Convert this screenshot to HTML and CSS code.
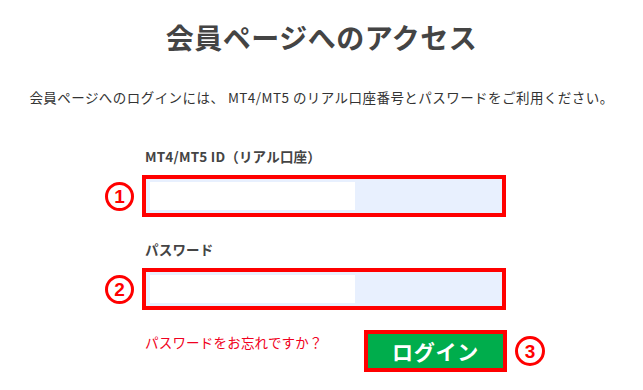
FILE: index.html
```html
<!DOCTYPE html>
<html lang="ja">
<head>
<meta charset="utf-8">
<link rel="stylesheet" href="styles.css">
</head>
<body>
<div class="page">
  <h1 class="title">会員ページへのアクセス</h1>
  <p class="lead">会員ページへのログインには、 MT4/MT5 のリアル口座番号とパスワードをご利用ください。</p>
  <div class="form">
    <div class="label label-id">MT4/MT5 ID（リアル口座）</div>
    <div class="row">
      <span class="num">1</span>
      <div class="field"><div class="fill"></div></div>
    </div>
    <div class="label label-pw">パスワード</div>
    <div class="row">
      <span class="num">2</span>
      <div class="field"><div class="fill"></div></div>
    </div>
    <div class="bottom">
      <a class="forgot">パスワードをお忘れですか？</a>
      <div class="login">ログイン</div>
      <span class="num num3">3</span>
    </div>
  </div>
</div>
</body>
</html>
```
FILE: styles.css
```css
html, body {
  margin: 0;
  padding: 0;
  background: #fff;
}
.page {
  width: 643px;
  height: 390px;
  font-family: "Noto Sans CJK JP", "Noto Sans", sans-serif;
  color: #333;
}
.title {
  margin: 0;
  padding-top: 18px;
  text-align: center;
  font-size: 28px;
  line-height: 38px;
  font-weight: bold;
  color: #444;
  letter-spacing: 0.5px;
}
.lead {
  margin: 31px 0 0;
  text-align: center;
  font-size: 13.5px;
  line-height: 20px;
  color: #333;
  letter-spacing: 0.45px;
  white-space: nowrap;
}
.form {
  margin-left: 100px;
}
.label {
  padding-left: 45px;
  font-size: 13.5px;
  line-height: 18px;
  font-weight: bold;
  color: #444;
  letter-spacing: 0.2px;
}
.label-id {
  margin-top: 40px;
}
.label-pw {
  margin-top: 23px;
}
.row {
  display: flex;
  align-items: center;
  margin-top: 10px;
}
.num {
  box-sizing: border-box;
  width: 29px;
  height: 29px;
  margin-left: 5px;
  margin-right: 8px;
  border: 3.5px solid #f00;
  border-radius: 50%;
  display: flex;
  align-items: center;
  justify-content: center;
  color: #f00;
  font-family: "Liberation Sans", Arial, sans-serif;
  font-weight: bold;
  font-size: 19px;
  line-height: 1;
}
.field {
  box-sizing: border-box;
  width: 364px;
  height: 42px;
  border: 4px solid #f00;
  background: #e8f0fe;
  padding: 3px 4px;
}
.fill {
  width: 205px;
  height: 100%;
  background: #fff;
}
.bottom {
  display: flex;
  align-items: center;
  margin-top: 20px;
  padding-left: 45px;
}
.forgot {
  width: 219px;
  font-size: 13.5px;
  line-height: 20px;
  color: #f00020;
  margin-top: -18px;
  letter-spacing: 0.2px;
}
.login {
  box-sizing: border-box;
  width: 143px;
  height: 42px;
  border: 4px solid #f00;
  background: #00ad4c;
  color: #fff;
  font-size: 21px;
  font-weight: bold;
  display: flex;
  align-items: center;
  justify-content: center;
  letter-spacing: 0.8px;
}
.num3 {
  margin-left: 8px;
  margin-right: 0;
  width: 30px;
  height: 30px;
}
```
